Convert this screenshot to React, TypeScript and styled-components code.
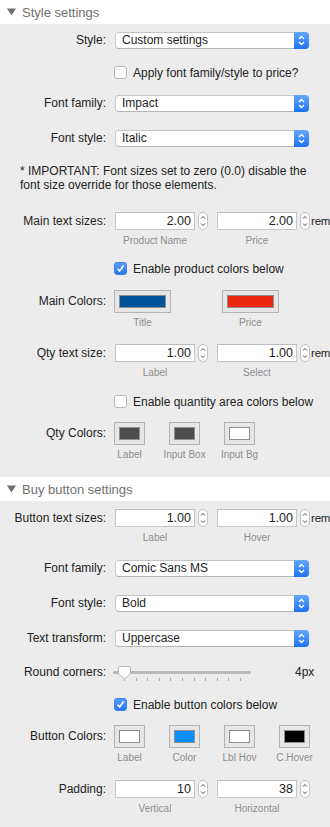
import React from 'react';
import styled, { createGlobalStyle } from 'styled-components';

const GlobalStyle = createGlobalStyle`
  html, body {
    margin: 0;
    padding: 0;
    background: #ececec;
  }
  body {
    font-family: "Liberation Sans", Arial, sans-serif;
    font-size: 12px;
    color: #232323;
    overflow-x: hidden;
  }
`;

const Page = styled.div`
  width: 330px;
  overflow: hidden;
`;

const SectionHeader = styled.div`
  height: 24px;
  background: #ffffff;
  display: flex;
  align-items: center;
  padding-left: 7px;
  gap: 6px;
  font-size: 13px;
  color: #707070;
`;

const Panel = styled.div<{ $pb: number }>`
  display: flex;
  flex-direction: column;
  padding-bottom: ${p => p.$pb}px;
`;

const Row = styled.div<{ $mt: number }>`
  display: grid;
  grid-template-columns: 106px 1fr;
  column-gap: 8px;
  align-items: start;
  margin-top: ${p => p.$mt}px;
`;

const Label = styled.div<{ $h?: number }>`
  text-align: right;
  white-space: nowrap;
  line-height: ${p => p.$h ?? 18}px;
`;

const Note = styled.div<{ $mt: number }>`
  margin-top: ${p => p.$mt}px;
  padding: 0 10px 0 20px;
  line-height: 14px;
`;

const SelectBox = styled.div`
  position: relative;
  margin-left: 1px;
  width: 194px;
  height: 17px;
  box-sizing: border-box;
  background: #ffffff;
  border: 1px solid #c9c9c9;
  border-top-color: #c3c3c3;
  border-bottom-color: #b4b4b4;
  border-radius: 4px;
  display: flex;
  align-items: center;
  padding-left: 6px;
  line-height: 15px;
`;

const SelectArrow = styled.div`
  position: absolute;
  right: -1px;
  top: -1px;
  bottom: -1px;
  width: 15px;
  border-radius: 0 4px 4px 0;
  background: linear-gradient(#64a7fb, #1f72f1);
  display: flex;
  align-items: center;
  justify-content: center;
`;

const Controls = styled.div`
  display: flex;
  align-items: flex-start;
`;

const FieldCol = styled.div<{ $w: number; $ml?: number }>`
  width: ${p => p.$w}px;
  margin-left: ${p => p.$ml ?? 0}px;
  display: flex;
  flex-direction: column;
  align-items: center;
`;

const NumInput = styled.div`
  width: 80px;
  height: 18px;
  box-sizing: border-box;
  background: #ffffff;
  border: 1px solid #c6c6c6;
  border-top-color: #bdbdbd;
  text-align: right;
  padding-right: 3px;
  line-height: 16px;
  font-size: 12.5px;
`;

const Stepper = styled.div`
  width: 10px;
  height: 18px;
  margin-left: 3px;
  box-sizing: border-box;
  background: #ffffff;
  border: 1px solid #c2c2c2;
  border-radius: 5px;
  display: flex;
  align-items: center;
  justify-content: center;
`;

const Unit = styled.div`
  margin-left: 1px;
  line-height: 18px;
  font-size: 11.5px;
  letter-spacing: -0.2px;
  white-space: nowrap;
`;

const SubLabel = styled.div<{ $mt: number }>`
  margin-top: ${p => p.$mt}px;
  font-size: 10px;
  line-height: 12px;
  color: #8d8d8d;
  white-space: nowrap;
`;

const CheckRow = styled.label`
  display: flex;
  align-items: center;
  gap: 6px;
  height: 17px;
  white-space: nowrap;
`;

const CheckBox = styled.span<{ $on: boolean }>`
  width: 13px;
  height: 13px;
  box-sizing: border-box;
  border-radius: 3px;
  border: 1px solid ${p => (p.$on ? '#3a83f4' : '#b9b9b9')};
  background: ${p => (p.$on ? 'linear-gradient(#5a9cf8, #2a77f2)' : '#ffffff')};
  display: flex;
  align-items: center;
  justify-content: center;
`;

const Swatch = styled.div<{ $w: number }>`
  width: ${p => p.$w}px;
  height: 23px;
  box-sizing: border-box;
  background: #e6e6e6;
  border: 1px solid #b3b3b3;
  padding: 4px;
`;

const SwatchFill = styled.div<{ $c: string }>`
  width: 100%;
  height: 100%;
  box-sizing: border-box;
  background: ${p => p.$c};
  border: 1px solid #8f8f8f;
`;

const SliderBox = styled.div`
  position: relative;
  width: 138px;
  height: 18px;
  margin-left: -1px;
`;

const Track = styled.div`
  position: absolute;
  left: 0;
  right: 0;
  top: 8px;
  height: 3px;
  border-radius: 2px;
  background: #b9b9b9;
`;

const Thumb = styled.svg`
  position: absolute;
  left: 5px;
  top: 3px;
`;

const Ticks = styled.div`
  position: absolute;
  left: 11px;
  width: 117px;
  top: 15px;
  display: flex;
  justify-content: space-between;
`;

const Tick = styled.span`
  width: 1px;
  height: 3px;
  background: #a8a8a8;
`;

const SliderValue = styled.div`
  margin-left: 44px;
  line-height: 18px;
`;

const Triangle = () => (
  <svg width="9" height="8" viewBox="0 0 9 8">
    <path d="M0 0.5 H9 L4.5 7.5 Z" fill="#6f6f6f" />
  </svg>
);

const Select = ({ value }: { value: string }) => (
  <SelectBox>
    {value}
    <SelectArrow>
      <svg width="7" height="11" viewBox="0 0 7 11">
        <path d="M1 4 L3.5 1.5 L6 4 M1 7 L3.5 9.5 L6 7" fill="none" stroke="#fff" strokeWidth="1.4" />
      </svg>
    </SelectArrow>
  </SelectBox>
);

const StepperIcon = () => (
  <Stepper>
    <svg width="6" height="14" viewBox="0 0 6 14">
      <path d="M1 4.5 L3 2.5 L5 4.5 M1 9.5 L3 11.5 L5 9.5" fill="none" stroke="#4a4a4a" strokeWidth="1" />
    </svg>
  </Stepper>
);

const Check = ({ on, text }: { on: boolean; text: string }) => (
  <CheckRow>
    <CheckBox $on={on}>
      {on && (
        <svg width="9" height="9" viewBox="0 0 9 9">
          <path d="M1.5 4.8 L3.6 7 L7.6 1.6" fill="none" stroke="#fff" strokeWidth="1.6" />
        </svg>
      )}
    </CheckBox>
    {text}
  </CheckRow>
);

type Pair = { value: string; sub: string };

const NumberPair = ({ a, b, unit }: { a: Pair; b: Pair; unit?: boolean }) => (
  <Controls>
    <FieldCol $w={80} $ml={1}>
      <NumInput>{a.value}</NumInput>
      <SubLabel $mt={5}>{a.sub}</SubLabel>
    </FieldCol>
    <StepperIcon />
    <FieldCol $w={80} $ml={9}>
      <NumInput>{b.value}</NumInput>
      <SubLabel $mt={5}>{b.sub}</SubLabel>
    </FieldCol>
    <StepperIcon />
    {unit && <Unit>rem</Unit>}
  </Controls>
);

type Sw = { color: string; label: string };

const SwatchRow = ({ items, w, gap }: { items: Sw[]; w: number; gap: number }) => (
  <Controls style={{ gap }}>
    {items.map(s => (
      <FieldCol key={s.label} $w={w}>
        <Swatch $w={w}>
          <SwatchFill $c={s.color} />
        </Swatch>
        <SubLabel $mt={4}>{s.label}</SubLabel>
      </FieldCol>
    ))}
  </Controls>
);

const App = () => (
  <>
    <GlobalStyle />
    <Page>
      <SectionHeader>
        <Triangle />
        Style settings
      </SectionHeader>
      <Panel $pb={16}>
        <Row $mt={8}>
          <Label $h={17}>Style:</Label>
          <Select value="Custom settings" />
        </Row>
        <Row $mt={15}>
          <Label />
          <Check on={false} text="Apply font family/style to price?" />
        </Row>
        <Row $mt={14}>
          <Label $h={17}>Font family:</Label>
          <Select value="Impact" />
        </Row>
        <Row $mt={18}>
          <Label $h={17}>Font style:</Label>
          <Select value="Italic" />
        </Row>
        <Note $mt={17}>
          * IMPORTANT: Font sizes set to zero (0.0) disable the font size override for those elements.
        </Note>
        <Row $mt={20}>
          <Label>Main text sizes:</Label>
          <NumberPair a={{ value: '2.00', sub: 'Product Name' }} b={{ value: '2.00', sub: 'Price' }} unit />
        </Row>
        <Row $mt={13}>
          <Label />
          <Check on text="Enable product colors below" />
        </Row>
        <Row $mt={13}>
          <Label $h={23}>Main Colors:</Label>
          <SwatchRow
            w={57}
            gap={51}
            items={[
              { color: '#01539a', label: 'Title' },
              { color: '#ea2710', label: 'Price' },
            ]}
          />
        </Row>
        <Row $mt={15}>
          <Label>Qty text size:</Label>
          <NumberPair a={{ value: '1.00', sub: 'Label' }} b={{ value: '1.00', sub: 'Select' }} unit />
        </Row>
        <Row $mt={14}>
          <Label />
          <Check on={false} text="Enable quantity area colors below" />
        </Row>
        <Row $mt={12}>
          <Label $h={23}>Qty Colors:</Label>
          <SwatchRow
            w={31}
            gap={24}
            items={[
              { color: '#4d4d4d', label: 'Label' },
              { color: '#4d4d4d', label: 'Input Box' },
              { color: '#ffffff', label: 'Input Bg' },
            ]}
          />
        </Row>
      </Panel>

      <SectionHeader>
        <Triangle />
        Buy button settings
      </SectionHeader>
      <Panel $pb={12}>
        <Row $mt={8}>
          <Label>Button text sizes:</Label>
          <NumberPair a={{ value: '1.00', sub: 'Label' }} b={{ value: '1.00', sub: 'Hover' }} unit />
        </Row>
        <Row $mt={16}>
          <Label $h={17}>Font family:</Label>
          <Select value="Comic Sans MS" />
        </Row>
        <Row $mt={18}>
          <Label $h={17}>Font style:</Label>
          <Select value="Bold" />
        </Row>
        <Row $mt={18}>
          <Label $h={17}>Text transform:</Label>
          <Select value="Uppercase" />
        </Row>
        <Row $mt={16}>
          <Label>Round corners:</Label>
          <Controls>
            <SliderBox>
              <Track />
              <Ticks>
                {Array.from({ length: 11 }).map((_, i) => (
                  <Tick key={i} />
                ))}
              </Ticks>
              <Thumb width="13" height="14" viewBox="0 0 13 14">
                <path
                  d="M2 0.5 H11 Q12.5 0.5 12.5 2 V7.5 L6.5 13 L0.5 7.5 V2 Q0.5 0.5 2 0.5 Z"
                  fill="#ffffff"
                  stroke="#a9a9a9"
                  strokeWidth="0.8"
                />
              </Thumb>
            </SliderBox>
            <SliderValue>4px</SliderValue>
          </Controls>
        </Row>
        <Row $mt={15}>
          <Label />
          <Check on text="Enable button colors below" />
        </Row>
        <Row $mt={12}>
          <Label $h={23}>Button Colors:</Label>
          <SwatchRow
            w={31}
            gap={24}
            items={[
              { color: '#ffffff', label: 'Label' },
              { color: '#0a8dfd', label: 'Color' },
              { color: '#ffffff', label: 'Lbl Hov' },
              { color: '#000000', label: 'C.Hover' },
            ]}
          />
        </Row>
        <Row $mt={16}>
          <Label>Padding:</Label>
          <NumberPair a={{ value: '10', sub: 'Vertical' }} b={{ value: '38', sub: 'Horizontal' }} />
        </Row>
      </Panel>
    </Page>
  </>
);

export default App;
